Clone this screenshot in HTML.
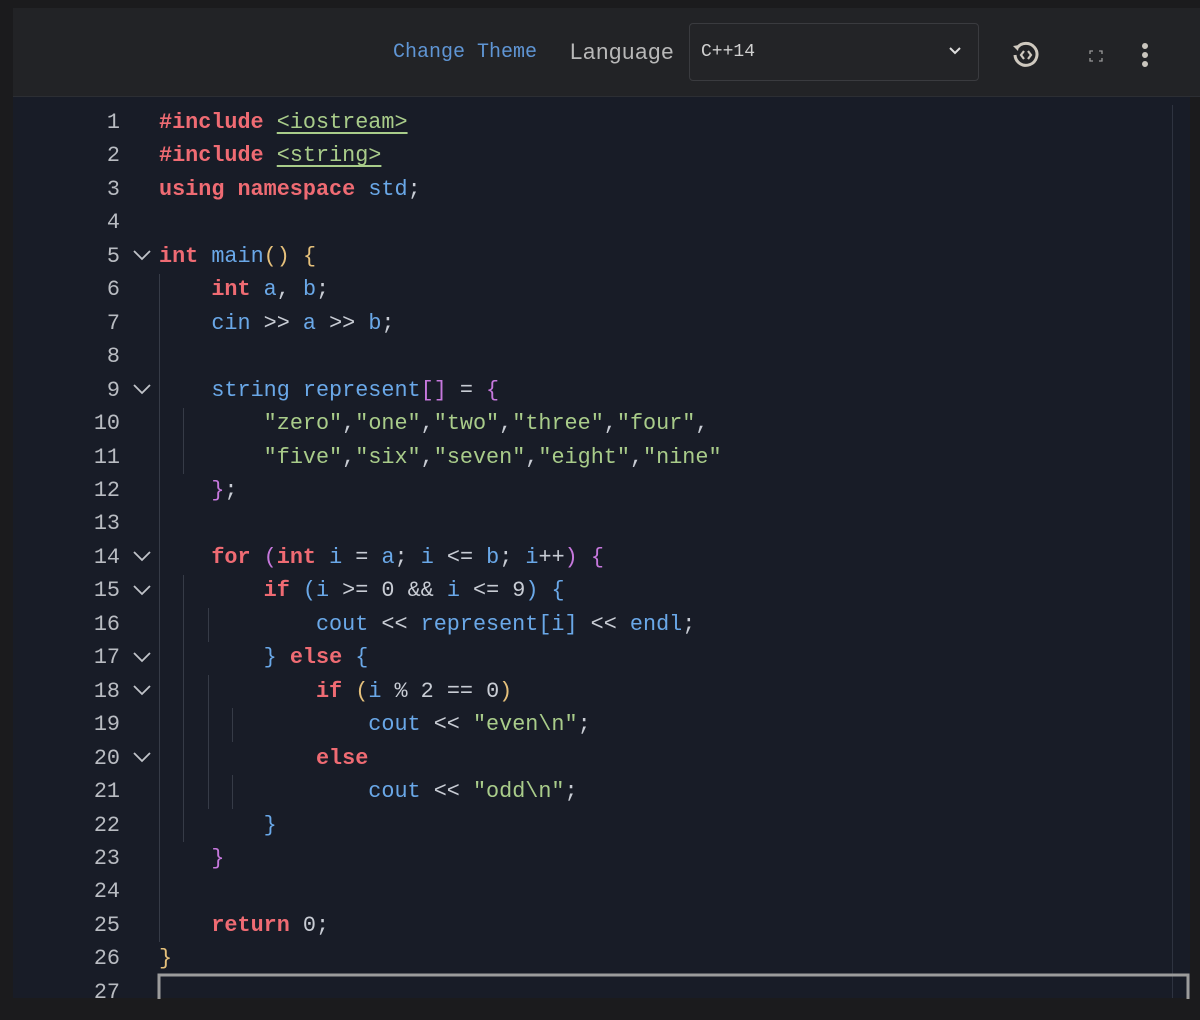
<!DOCTYPE html>
<html><head><meta charset="utf-8"><style>
html,body{margin:0;padding:0;width:1200px;height:1020px;overflow:hidden;background:#1b1b1d;font-family:"Liberation Sans",sans-serif}
#hdr{position:absolute;left:13px;top:8px;width:1187px;height:88px;background:#222326;border-bottom:1px solid #2c2e33}
#ed{position:absolute;left:13px;top:97px;width:1177px;height:901px;background:#181c27}
.t{position:absolute;font-family:"Liberation Mono",monospace;font-size:20px}
pre{margin:0;font-family:"Liberation Mono",monospace;font-size:21.8px;line-height:33.46px;position:absolute;top:106px}
#nums{left:60px;width:60px;text-align:right;color:#b9bcc2}
#code{left:159px;color:#c8ccd4}
.k{color:#ef6b73;font-weight:bold}.b{color:#6aa8e8}.s{color:#a9cc8a}.y{color:#e5c07b}.p{color:#c678dd}.n{color:#c8ccd4}
.u{text-decoration:underline;text-decoration-color:#a9cc8a;text-underline-offset:4px}
.g{position:absolute;width:1px;background:#363b47}
</style></head><body>
<div id="hdr">
<div class="t" style="left:380px;top:33px;color:#5f95d4">Change Theme</div>
<div class="t" style="left:557px;top:31px;color:#b8b8b8;font-family:'Liberation Sans',sans-serif;font-size:22px;letter-spacing:0.8px">Language</div>
<div style="position:absolute;left:676px;top:15px;width:288px;height:56px;border:1px solid #3a3b3f;border-radius:4px;background:#232427"></div>
<div class="t" style="left:688px;top:34px;color:#d0d0d0;font-size:18px">C++14</div>
<svg style="position:absolute;left:935px;top:38px" width="14" height="10"><path d="M2 2 L7 7 L12 2" stroke="#ddd" stroke-width="2" fill="none"/></svg>
<svg style="position:absolute;left:997px;top:31px" width="32" height="32" viewBox="0 0 32 32"><path d="M7 9 A11 11 0 1 1 5 16" stroke="#cfc9bf" stroke-width="3" fill="none"/><path d="M3 7 L9 6 L8 12Z" fill="#cfc9bf"/><path d="M14 12 L11 16 L14 20 M18 12 L21 16 L18 20" stroke="#cfc9bf" stroke-width="2.2" fill="none"/></svg>
<svg style="position:absolute;left:1076px;top:42px" width="14" height="12"><path d="M1 4V1H4M10 1H13V4M1 8V11H4M10 11H13V8" stroke="#999" stroke-width="1.3" fill="none"/></svg>
<svg style="position:absolute;left:1128px;top:34px" width="8" height="28"><circle cx="4" cy="4" r="3" fill="#c9c5bd"/><circle cx="4" cy="13" r="3" fill="#c9c5bd"/><circle cx="4" cy="22" r="3" fill="#c9c5bd"/></svg>
</div>
<div id="ed"></div>
<div style="position:absolute;left:1172px;top:105px;width:1px;height:893px;background:#2e3340"></div>
<div class="g" style="left:159px;top:274px;height:668px"></div>
<div class="g" style="left:183px;top:408px;height:66px"></div>
<div class="g" style="left:183px;top:575px;height:267px"></div>
<div class="g" style="left:208px;top:608px;height:34px"></div>
<div class="g" style="left:208px;top:675px;height:134px"></div>
<div class="g" style="left:232px;top:708px;height:34px"></div>
<div class="g" style="left:232px;top:775px;height:34px"></div>
<svg style="position:absolute;left:0;top:0" width="1200" height="1020">
<g stroke="#c0c3c9" stroke-width="1.8" fill="none">
<path d="M134 251 L142 259 L150 251"/><path d="M134 385 L142 393 L150 385"/><path d="M134 552 L142 560 L150 552"/><path d="M134 586 L142 594 L150 586"/><path d="M134 653 L142 661 L150 653"/><path d="M134 686 L142 694 L150 686"/><path d="M134 753 L142 761 L150 753"/>
</g>
<path d="M159 999 V975 H1188 V999" stroke="#9c9c9c" stroke-width="3" fill="none"/>
</svg>
<pre id="nums">1
2
3
4
5
6
7
8
9
10
11
12
13
14
15
16
17
18
19
20
21
22
23
24
25
26
27</pre>
<pre id="code"><span class="k">#include</span> <span class="s u">&lt;iostream&gt;</span>
<span class="k">#include</span> <span class="s u">&lt;string&gt;</span>
<span class="k">using namespace</span> <span class="b">std</span>;

<span class="k">int</span> <span class="b">main</span><span class="y">()</span> <span class="y">{</span>
    <span class="k">int</span> <span class="b">a</span>, <span class="b">b</span>;
    <span class="b">cin</span> &gt;&gt; <span class="b">a</span> &gt;&gt; <span class="b">b</span>;

    <span class="b">string represent</span><span class="p">[]</span> = <span class="p">{</span>
        <span class="s">"zero"</span>,<span class="s">"one"</span>,<span class="s">"two"</span>,<span class="s">"three"</span>,<span class="s">"four"</span>,
        <span class="s">"five"</span>,<span class="s">"six"</span>,<span class="s">"seven"</span>,<span class="s">"eight"</span>,<span class="s">"nine"</span>
    <span class="p">}</span>;

    <span class="k">for</span> <span class="p">(</span><span class="k">int</span> <span class="b">i</span> = <span class="b">a</span>; <span class="b">i</span> &lt;= <span class="b">b</span>; <span class="b">i</span>++<span class="p">)</span> <span class="p">{</span>
        <span class="k">if</span> <span class="b">(i</span> &gt;= 0 &amp;&amp; <span class="b">i</span> &lt;= 9<span class="b">)</span> <span class="b">{</span>
            <span class="b">cout</span> &lt;&lt; <span class="b">represent[i]</span> &lt;&lt; <span class="b">endl</span>;
        <span class="b">}</span> <span class="k">else</span> <span class="b">{</span>
            <span class="k">if</span> <span class="y">(</span><span class="b">i</span> % 2 == 0<span class="y">)</span>
                <span class="b">cout</span> &lt;&lt; <span class="s">"even\n"</span>;
            <span class="k">else</span>
                <span class="b">cout</span> &lt;&lt; <span class="s">"odd\n"</span>;
        <span class="b">}</span>
    <span class="p">}</span>

    <span class="k">return</span> 0;
<span class="y">}</span>
</pre>
</body></html>
